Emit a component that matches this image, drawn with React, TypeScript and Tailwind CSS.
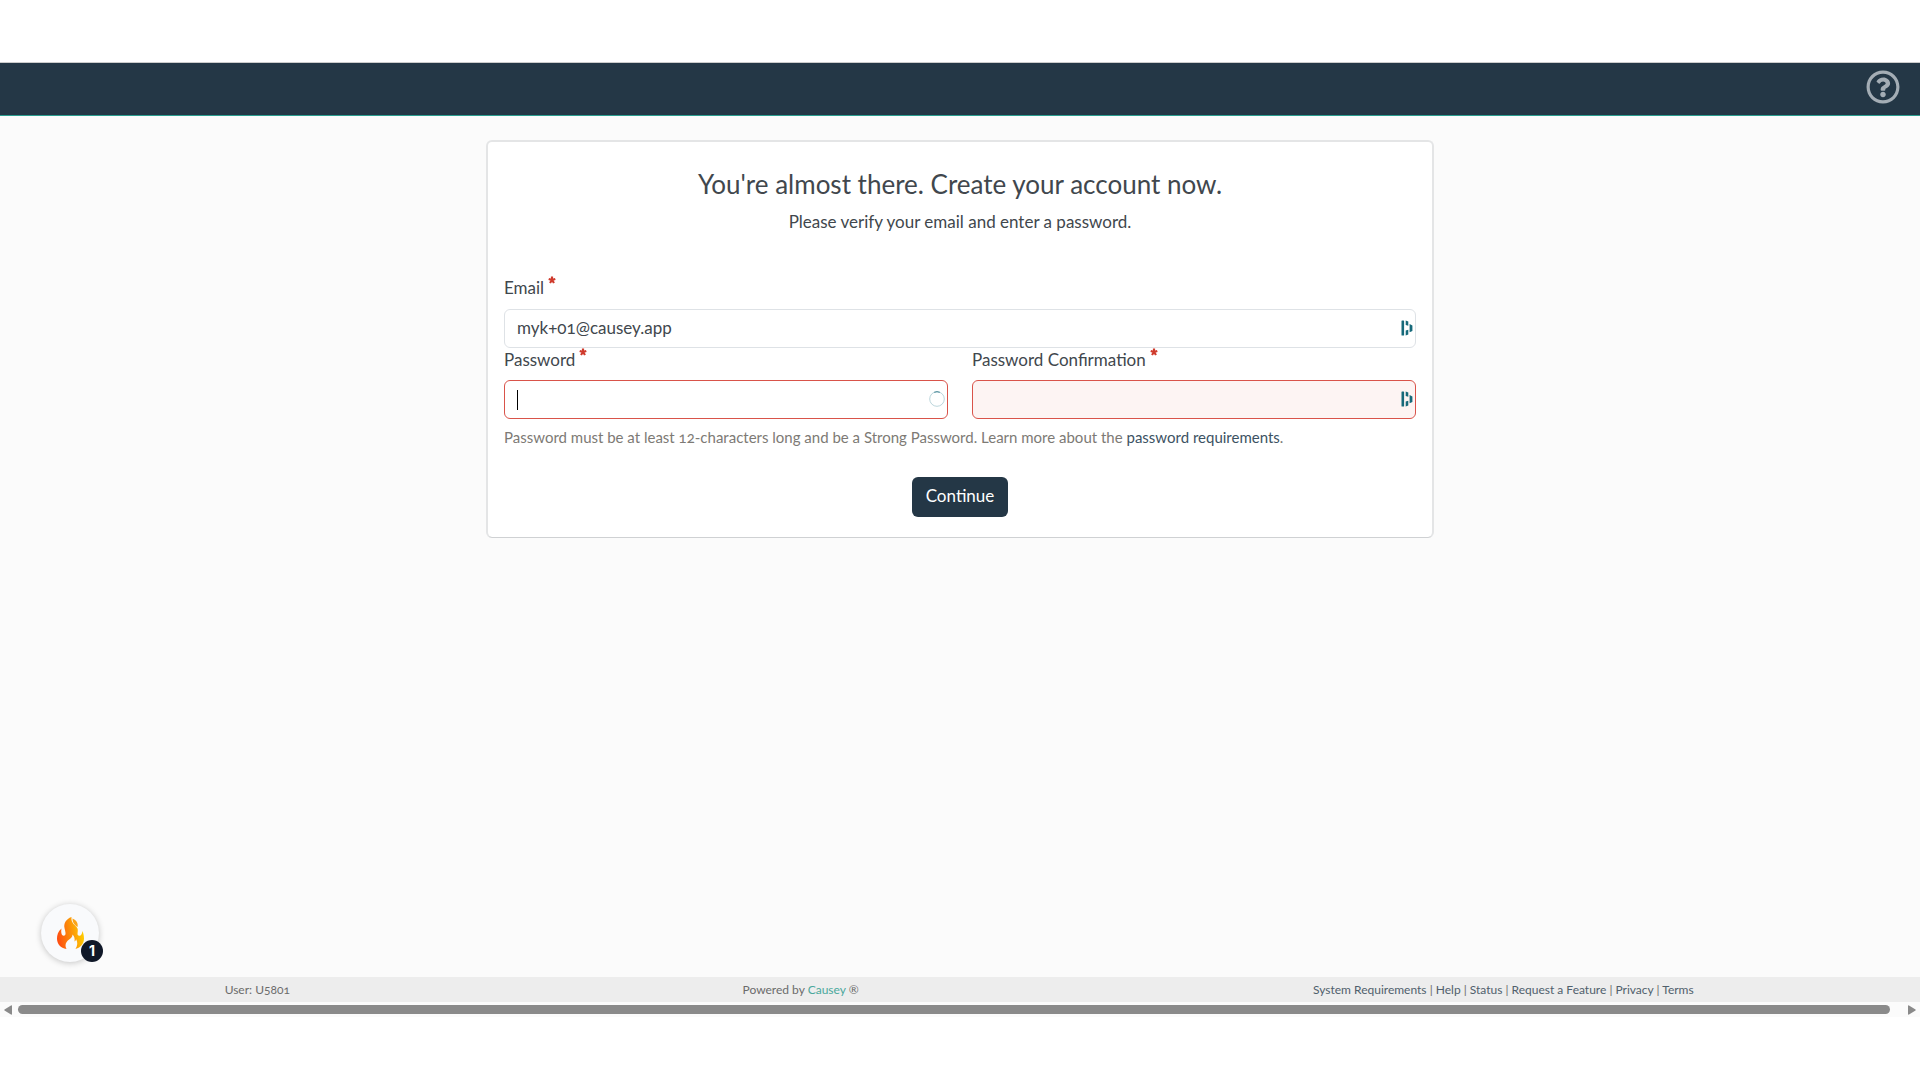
import { useState } from "react";
import { FaRegQuestionCircle } from "react-icons/fa";

const footerLinks = ["System Requirements", "Help", "Status", "Request a Feature", "Privacy", "Terms"];

function Required() {
  return (
    <svg
      viewBox="0 0 16 16"
      className="w-2 h-2 ml-1 text-[#cf3a2c]"
      stroke="currentColor"
      strokeWidth="4.4"
      aria-hidden="true"
    >
      <path d="M8 8V1M8 8L1.4 5.9M8 8L14.6 5.9M8 8L4 14M8 8L12 14" />
    </svg>
  );
}

function VaultIcon() {
  return (
    <svg
      viewBox="0 0 12 16"
      className="absolute right-[3px] top-[11px] w-3 h-4"
      fill="#16697a"
      aria-hidden="true"
    >
      <rect x="0.5" y="0.5" width="2.6" height="15" rx="0.6" />
      <path d="M4.7 0.6L7.3 1.6V5.8L4.7 5ZM4.7 10.6L7.3 9.8V14.4L4.7 15.4ZM8.6 4L11.4 5.4V11L8.6 12.2Z" />
    </svg>
  );
}

function Spinner() {
  return (
    <svg
      viewBox="0 0 16 16"
      className="absolute right-[3px] top-[11px] w-4 h-4"
      fill="none"
      strokeWidth="1"
      aria-hidden="true"
    >
      <circle cx="8" cy="8" r="7.3" stroke="#bcd6dc" />
      <path d="M5.2 1.3A7.3 7.3 0 0 1 10.8 1.3" stroke="#3f8292" />
    </svg>
  );
}

function Flame() {
  return (
    <svg viewBox="0 0 27 32" className="w-[27px] h-8" aria-hidden="true">
      <defs>
        <linearGradient id="flame" x1="0" y1="0.7" x2="1" y2="0.5">
          <stop offset="0" stopColor="#ff4a12" />
          <stop offset="0.5" stopColor="#fb8c0a" />
          <stop offset="1" stopColor="#ffd000" />
        </linearGradient>
      </defs>
      <path
        fill="url(#flame)"
        d="M14.5 0C9 2 6.500 6.500 7.500 11C8.200 14.500 9.500 17.500 7.500 18.500C5.500 19.500 3.500 17 4.500 11.500C1 14.500 0 18 0 21.500C0 27 3.500 31 9.500 32C7.500 28 9 25 11.500 23C14 21 15.500 20 15.500 17.500C17.500 19.500 18 22 17.500 24.500C18.500 24 19 23 19 22C21 25 20.500 29 18.500 32C24 30.500 27 26.500 27 21.500C27 18 26 15.500 25.500 14C25 17.500 23.500 19.500 21.500 18.500C19.500 17.500 21.500 14.500 20.500 11.500C19 8 13.500 6.500 14.500 0Z"
      />
      <path fill="#fba51a" d="M15.500 1.500C19.500 3 21.500 6.500 20.500 10C18.500 8.500 15.500 6.500 15.500 1.500Z" />
    </svg>
  );
}

export default function App() {
  const [email, setEmail] = useState("myk+01@causey.app");
  const [password, setPassword] = useState("");
  const [confirmation, setConfirmation] = useState("");

  return (
    <div className="flex min-h-screen flex-col bg-white font-['Lato','Open_Sans',sans-serif] oldstyle-nums text-[#41474d]">
      <header className="mt-[62px] flex h-[54px] items-center justify-end border-t border-b border-t-[#cccccc] border-b-[#2a9d8f] bg-[#243746] pr-5">
        <button type="button" aria-label="Help" className="pb-1 text-[#a4adb5]">
          <FaRegQuestionCircle className="h-[34px] w-[34px]" />
        </button>
      </header>

      <main className="relative flex-1 bg-[#fbfbfb] pt-6">
        <form
          onSubmit={(e) => e.preventDefault()}
          className="mx-auto w-full max-w-[948px] rounded-md border-2 border-b border-[#e4e5e6] border-b-[#cfd1d3] bg-white px-4 pt-[26px] pb-5"
        >
          <h1 className="text-center text-[26px] leading-8">
            You&apos;re almost there. Create your account now.
          </h1>
          <p className="mt-[10px] text-center text-[17px] leading-6">
            Please verify your email and enter a password.
          </p>

          <div className="mt-[42px]">
            <label htmlFor="email" className="mb-[9px] flex h-6 text-[17px] leading-6">
              Email
              <Required />
            </label>
            <div className="relative">
              <input
                id="email"
                type="email"
                value={email}
                onChange={(e) => setEmail(e.target.value)}
                className="block h-[39px] w-full rounded-md border border-[#dee2e6] bg-white px-3 pb-0.5 text-[17px] outline-none"
              />
              <VaultIcon />
            </div>
          </div>

          <div className="grid grid-cols-2 gap-6">
            <div>
              <label htmlFor="password" className="mb-2 flex h-6 text-[17px] leading-6">
                Password
                <Required />
              </label>
              <div className="relative">
                <input
                  id="password"
                  type="password"
                  value={password}
                  onChange={(e) => setPassword(e.target.value)}
                  className="block h-[39px] w-full rounded-md border border-[#d9534a] bg-white px-3 text-[17px] caret-transparent outline-none"
                />
                <span className="pointer-events-none absolute top-[10px] left-[13px] h-5 w-px bg-black" />
                <Spinner />
              </div>
            </div>
            <div>
              <label htmlFor="confirmation" className="mb-2 flex h-6 text-[17px] leading-6">
                Password Confirmation
                <Required />
              </label>
              <div className="relative">
                <input
                  id="confirmation"
                  type="password"
                  value={confirmation}
                  onChange={(e) => setConfirmation(e.target.value)}
                  className="block h-[39px] w-full rounded-md border border-[#d9534a] bg-[#fdf4f3] px-3 text-[17px] outline-none"
                />
                <VaultIcon />
              </div>
            </div>
          </div>

          <p className="mt-2 text-[15px] leading-5 text-[#7d7a75]">
            Password must be at least 12-characters long and be a Strong Password. Learn more about
            the{" "}
            <a href="#requirements" className="text-[#3c5263]">
              password requirements
            </a>
            .
          </p>

          <div className="mt-[30px] flex justify-center">
            <button
              type="submit"
              className="h-10 rounded-md bg-[#243746] px-[14px] pb-0.5 text-[17px] text-white"
            >
              Continue
            </button>
          </div>
        </form>

        <button
          type="button"
          aria-label="Notifications"
          className="absolute bottom-[15px] left-[41px] flex h-[58px] w-[58px] items-center justify-center rounded-full bg-[#f9fafc] shadow-[0_1px_6px_rgba(0,0,0,0.22)]"
        >
          <Flame />
          <span className="absolute -right-1 bottom-0 flex h-[22px] w-[22px] items-center justify-center rounded-full bg-[#101828] font-['Inter',sans-serif] text-sm font-bold lining-nums text-white">
            1
          </span>
        </button>
      </main>

      <footer className="grid h-[25px] grid-cols-[268fr_298fr_434fr] items-center bg-[#ededed] text-center text-xs text-[#6b6b6b]">
        <span>User: U5801</span>
        <span>
          Powered by{" "}
          <a href="#causey" className="text-[#4aa89c]">
            Causey
          </a>{" "}
          ®
        </span>
        <nav>
          {footerLinks.map((link, i) => (
            <span key={link}>
              {i > 0 && " | "}
              <a href="#footer" className="text-[#50606c]">
                {link}
              </a>
            </span>
          ))}
        </nav>
      </footer>

      <div className="mb-[63px] flex h-[15px] items-center bg-[#fbfbfb] px-1">
        <svg viewBox="0 0 8 10" className="h-[10px] w-2" fill="#8a8a8a" aria-hidden="true">
          <path d="M8 1V9Q8 10 7 9.500L0.500 5.500Q0 5 0.500 4.500L7 0.500Q8 0 8 1Z" />
        </svg>
        <div className="mr-[18px] ml-[6px] h-[9px] flex-1 rounded-full bg-[#8a8a8a]" />
        <svg viewBox="0 0 8 10" className="h-[10px] w-2" fill="#8a8a8a" aria-hidden="true">
          <path d="M0 1V9Q0 10 1 9.500L7.500 5.500Q8 5 7.500 4.500L1 0.500Q0 0 0 1Z" />
        </svg>
      </div>
    </div>
  );
}
